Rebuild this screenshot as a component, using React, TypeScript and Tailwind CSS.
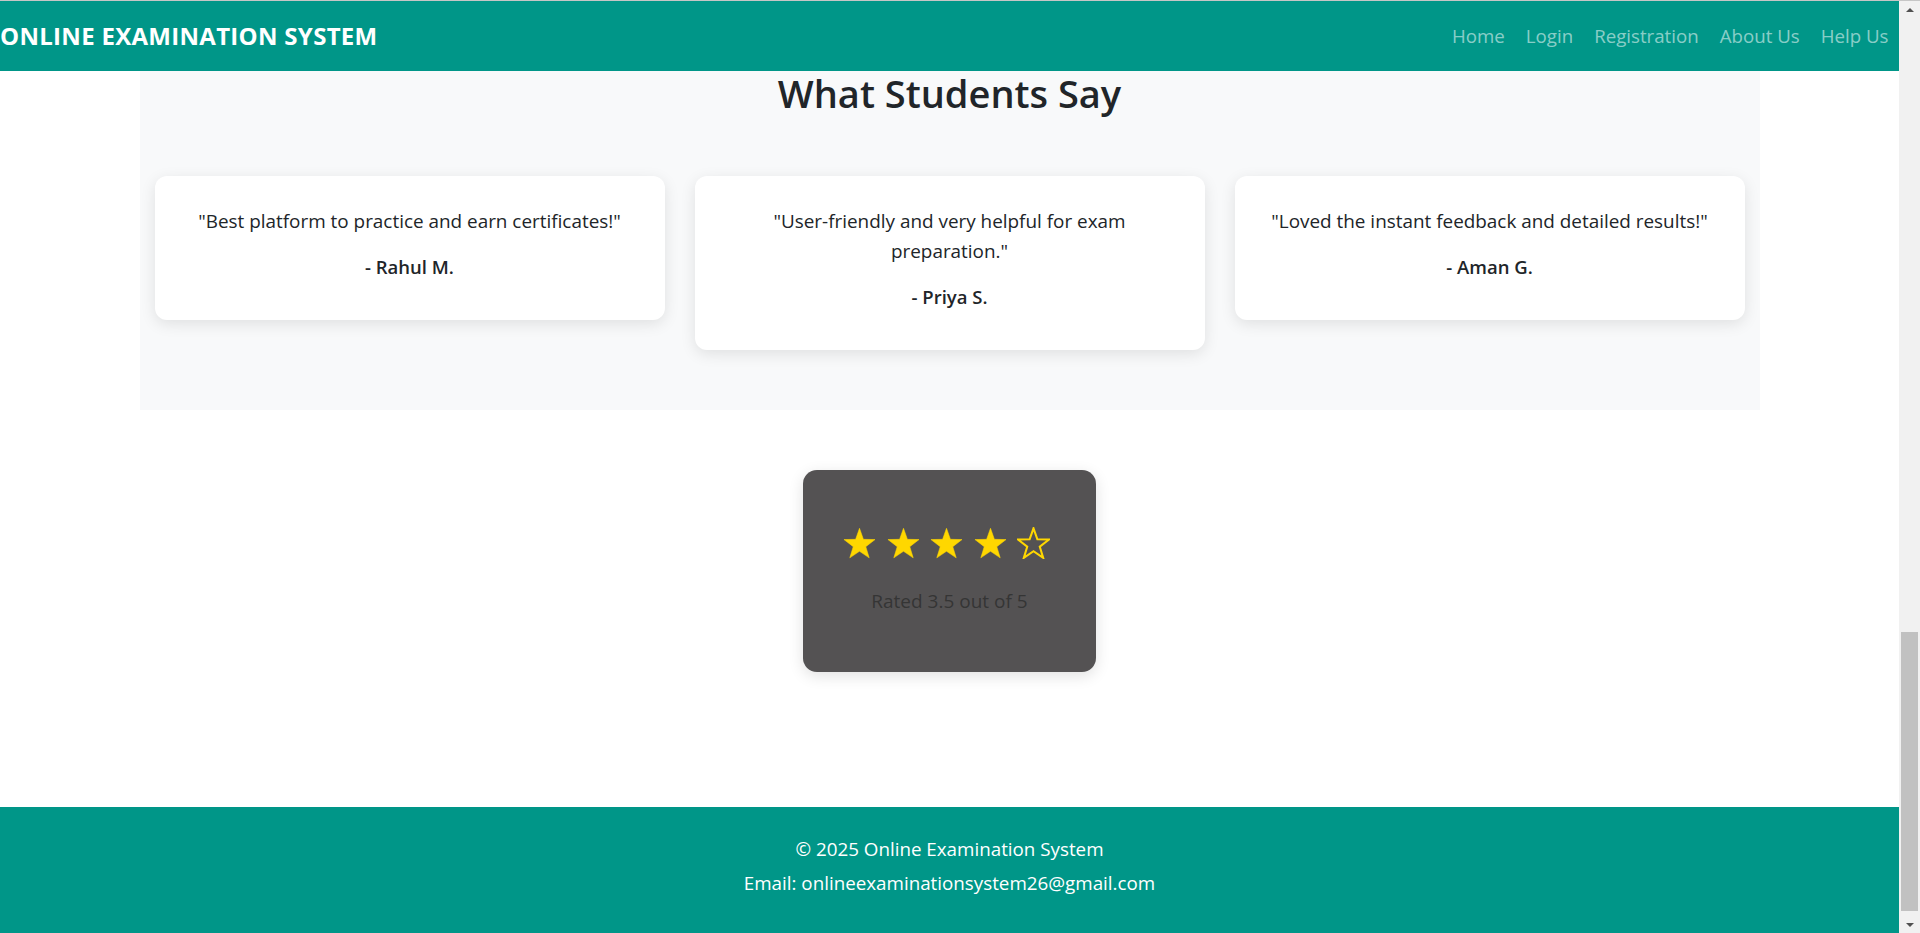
import React from "react";

const Star = ({ filled }: { filled: boolean }) => (
  <svg width="33" height="32" viewBox="0 0 24 23" className="block">
    <polygon
      points="12,0.8 14.82,8.82 23.3,9 16.57,14.18 19.05,22.3 12,17.5 4.95,22.3 7.43,14.18 0.7,9 9.18,8.82"
      fill={filled ? "#ffd700" : "none"}
      stroke="#ffd700"
      strokeWidth={filled ? 0.4 : 1.5}
      strokeLinejoin="miter"
    />
  </svg>
);

const testimonials = [
  { quote: '"Best platform to practice and earn certificates!"', name: "- Rahul M." },
  { quote: '"User-friendly and very helpful for exam preparation."', name: "- Priya S." },
  { quote: '"Loved the instant feedback and detailed results!"', name: "- Aman G." },
];

export default function App() {
  return (
    <div className="w-[1920px] h-[933px] overflow-hidden flex flex-col bg-white font-['Open_Sans','Noto_Sans',sans-serif] text-[#212529]">
      <div className="h-px bg-[#c6c6c6] shrink-0" />
      <div className="flex flex-1 min-h-0">
        <div className="w-[1899px] flex flex-col">
          <nav className="h-[70px] shrink-0 bg-[#009688] flex items-center justify-between">
            <div className="text-white font-bold text-[24px] tracking-[0.3px] leading-none">
              ONLINE EXAMINATION SYSTEM
            </div>
            <div className="flex items-center text-[18.7px] text-[rgba(255,255,255,0.55)]">
              <span className="px-[10.5px]">Home</span>
              <span className="px-[10.5px]">Login</span>
              <span className="px-[10.5px]">Registration</span>
              <span className="px-[10.5px]">About Us</span>
              <span className="px-[10.5px]">Help Us</span>
            </div>
          </nav>

          <section className="mx-auto w-[1620px] bg-[#f8f9fa] px-[15px] pb-[60px]">
            <h2 className="pt-[2px] text-center text-[38px] leading-[40px] font-semibold text-[#212529] mb-[63px]">
              What Students Say
            </h2>
            <div className="grid grid-cols-3 gap-[30px] items-start">
              {testimonials.map((t) => (
                <div
                  key={t.name}
                  className="bg-white rounded-[12px] shadow-[0_4px_15px_rgba(0,0,0,0.1)] px-[30px] py-[30px] text-center"
                >
                  <p className="text-[18.9px] leading-[30px] mb-[16px] text-[#212529]">{t.quote}</p>
                  <p className="text-[18.5px] leading-[30px] font-semibold mb-[8px] text-[#212529]">{t.name}</p>
                </div>
              ))}
            </div>
          </section>

          <div className="mt-[60px] self-center w-[293px] h-[202px] rounded-[14px] bg-[#545253] shadow-[0_4px_15px_rgba(0,0,0,0.12)] flex flex-col items-center pt-[57px]">
            <div className="flex items-center gap-[10.5px] h-[32px] mr-[6px]">
              <Star filled />
              <Star filled />
              <Star filled />
              <Star filled />
              <Star filled={false} />
            </div>
            <p className="mt-[28px] text-[19px] leading-[28px] text-[#353535]">Rated 3.5 out of 5</p>
          </div>

          <div className="flex-1" />

          <footer className="h-[126px] shrink-0 bg-[#009688] pt-[25px] text-center text-white text-[18.8px]">
            <p className="leading-[34px]">© 2025 Online Examination System</p>
            <p className="leading-[34px]">Email: onlineexaminationsystem26@gmail.com</p>
          </footer>
        </div>

        <div className="w-[21px] bg-[#f1f1f1] flex flex-col items-center">
          <div className="h-[17px] w-full flex items-center justify-center">
            <div className="w-0 h-0 border-l-[4px] border-r-[4px] border-b-[4px] border-l-transparent border-r-transparent border-b-[#505050]" />
          </div>
          <div className="flex-1" />
          <div className="w-[17px] h-[279px] bg-[#c1c1c1]" />
          <div className="h-[5px]" />
          <div className="h-[17px] w-full flex items-center justify-center">
            <div className="w-0 h-0 border-l-[4px] border-r-[4px] border-t-[4px] border-l-transparent border-r-transparent border-t-[#505050]" />
          </div>
        </div>
      </div>
    </div>
  );
}
